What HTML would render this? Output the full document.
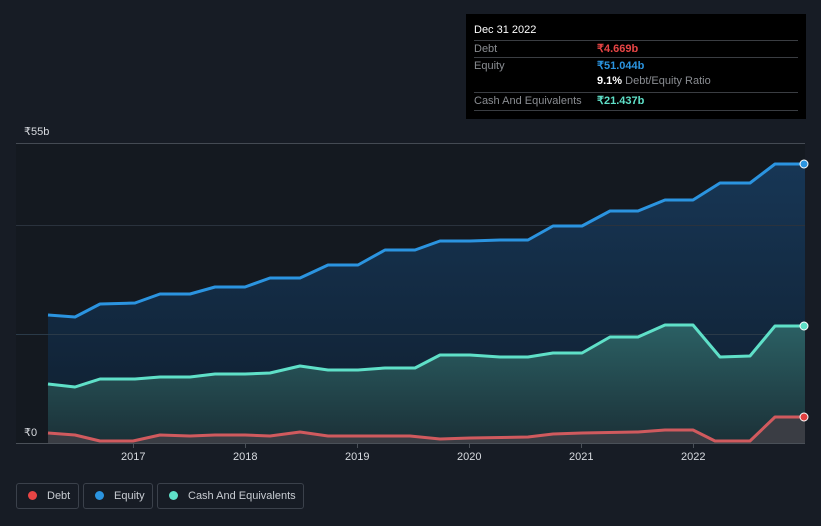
<!DOCTYPE html>
<html><head><meta charset="utf-8"><style>
html,body{margin:0;width:821px;height:526px;overflow:hidden}
body{background:#171c25;font-family:"Liberation Sans",sans-serif;position:relative}
.tt{position:absolute;left:466px;top:14px;width:340px;height:105px;background:#000;color:#fff;font-size:11px}
.row{position:absolute;left:8px;width:324px;border-top:1px solid #3a3d42;height:17px;line-height:17px}
.lab{color:#8a8d92;position:absolute;left:0}
.val{position:absolute;left:123px;font-weight:bold}
.leg{position:absolute;top:483px;height:26px;border:1px solid #3b414b;border-radius:3px;color:#c8ccd2;font-size:11px;line-height:24px;box-sizing:border-box;white-space:nowrap}
.leg i{display:inline-block;width:9px;height:9px;border-radius:50%;margin:0 10px 0 11px;vertical-align:-1px}
.ax{position:absolute;color:#d8dbe0;font-size:11px}
</style></head><body>
<svg width="821" height="526" style="position:absolute;left:0;top:0">
<defs>
<linearGradient id="ge" x1="0" y1="0" x2="0" y2="1"><stop offset="0" stop-color="#173655"/><stop offset="1" stop-color="#0f1e2e"/></linearGradient>
<linearGradient id="gc" x1="0" y1="0" x2="0" y2="1"><stop offset="0" stop-color="#2b6064"/><stop offset="1" stop-color="#1b3037"/></linearGradient>
</defs>
<rect x="16" y="143" width="789" height="300" fill="#141920"/>
<line x1="16" y1="143.5" x2="805" y2="143.5" stroke="#444a53"/>
<path d="M48,315 L75,317 L100,304 L135,303 L160,294 L190,294 L215,287 L245,287 L270,278 L300,278 L328,265 L358,265 L385,250 L415,250 L440,241 L470,241 L500,240 L528,240 L553,226 L582,226 L610,211 L638,211 L665,200 L693,200 L720,183 L750,183 L775,164 L805,164 L805,443 L48,443Z" fill="url(#ge)"/>
<line x1="16" y1="225.5" x2="805" y2="225.5" stroke="#2a323d"/>
<line x1="16" y1="334.5" x2="805" y2="334.5" stroke="#2a3a48"/>
<path d="M48,384 L75,387 L100,379 L135,379 L160,377 L190,377 L215,374 L245,374 L270,373 L300,366 L328,370 L358,370 L385,368 L415,368 L440,355 L470,355 L500,357 L528,357 L553,353 L582,353 L610,337 L638,337 L665,325 L693,325 L720,357 L750,356 L775,326 L805,326 L805,443 L48,443Z" fill="url(#gc)"/>
<path d="M48,433 L75,435 L100,441 L133,441 L160,435 L190,436 L215,435 L245,435 L270,436 L300,432 L328,436 L410,436 L440,439 L470,438 L528,437 L553,434 L582,433 L638,432 L665,430 L693,430 L715,441 L750,441 L775,417 L805,417 L805,443 L48,443Z" fill="#3a3d44"/>
<g fill="none" stroke-width="3" stroke-linejoin="round">
<path d="M48,315 L75,317 L100,304 L135,303 L160,294 L190,294 L215,287 L245,287 L270,278 L300,278 L328,265 L358,265 L385,250 L415,250 L440,241 L470,241 L500,240 L528,240 L553,226 L582,226 L610,211 L638,211 L665,200 L693,200 L720,183 L750,183 L775,164 L805,164" stroke="#2b94e0"/>
<path d="M48,384 L75,387 L100,379 L135,379 L160,377 L190,377 L215,374 L245,374 L270,373 L300,366 L328,370 L358,370 L385,368 L415,368 L440,355 L470,355 L500,357 L528,357 L553,353 L582,353 L610,337 L638,337 L665,325 L693,325 L720,357 L750,356 L775,326 L805,326" stroke="#5fe0c8"/>
<path d="M48,433 L75,435 L100,441 L133,441 L160,435 L190,436 L215,435 L245,435 L270,436 L300,432 L328,436 L410,436 L440,439 L470,438 L528,437 L553,434 L582,433 L638,432 L665,430 L693,430 L715,441 L750,441 L775,417 L805,417" stroke="#d05a5e"/>
</g>
<line x1="16" y1="443.5" x2="805" y2="443.5" stroke="#4a5058"/>
<g stroke="#4a5058"><line x1="133.5" y1="443" x2="133.5" y2="448"/><line x1="245.5" y1="443" x2="245.5" y2="448"/><line x1="357.5" y1="443" x2="357.5" y2="448"/><line x1="469.5" y1="443" x2="469.5" y2="448"/><line x1="581.5" y1="443" x2="581.5" y2="448"/><line x1="693.5" y1="443" x2="693.5" y2="448"/></g>
<circle cx="804" cy="164" r="4" fill="#2b94e0" stroke="#fff"/>
<circle cx="804" cy="326" r="4" fill="#5fe0c8" stroke="#fff"/>
<circle cx="804" cy="417" r="4" fill="#e04040" stroke="#fff"/>
</svg>
<div class="ax" style="left:24px;top:125px">₹55b</div>
<div class="ax" style="left:24px;top:426px">₹0</div>
<div class="ax" style="left:121px;top:451px">2017</div>
<div class="ax" style="left:233px;top:451px">2018</div>
<div class="ax" style="left:345px;top:451px">2019</div>
<div class="ax" style="left:457px;top:451px">2020</div>
<div class="ax" style="left:569px;top:451px">2021</div>
<div class="ax" style="left:681px;top:451px">2022</div>
<div class="tt">
<div style="position:absolute;left:8px;top:10px">Dec 31 2022</div>
<div class="row" style="top:26px"><span class="lab">Debt</span><span class="val" style="color:#e84545">₹4.669b</span></div>
<div class="row" style="top:43px"><span class="lab">Equity</span><span class="val" style="color:#2b94e0">₹51.044b</span></div>
<div style="position:absolute;left:131px;top:61px"><b>9.1%</b> <span style="color:#8a8d92">Debt/Equity Ratio</span></div>
<div class="row" style="top:78px;border-bottom:1px solid #3a3d42"><span class="lab">Cash And Equivalents</span><span class="val" style="color:#5fe0c8">₹21.437b</span></div>
</div>
<div class="leg" style="left:16px;width:63px"><i style="background:#e84545"></i>Debt</div>
<div class="leg" style="left:83px;width:70px"><i style="background:#2b94e0"></i>Equity</div>
<div class="leg" style="left:157px;width:147px"><i style="background:#5fe0c8"></i>Cash And Equivalents</div>
</body></html>
